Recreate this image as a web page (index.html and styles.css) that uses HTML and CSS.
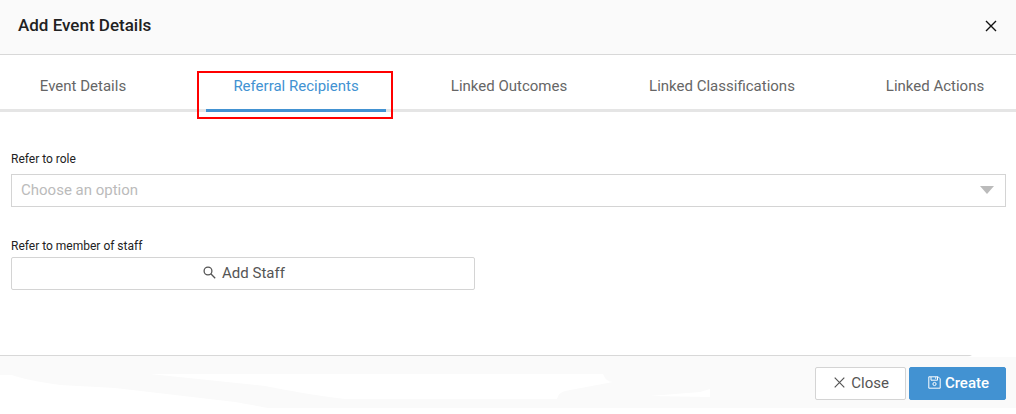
FILE: index.html
```html
<!DOCTYPE html>
<html lang="en">
<head>
<meta charset="utf-8">
<title>Add Event Details</title>
<link rel="stylesheet" href="styles.css">
</head>
<body>
<div class="dialog">
  <header class="header">
    <h1 class="title">Add Event Details</h1>
    <button class="dismiss" type="button" aria-label="Dismiss">
      <svg width="12" height="12" viewBox="0 0 12 12"><path d="M1 1l10 10M11 1L1 11" fill="none" stroke="#111" stroke-width="1.4"/></svg>
    </button>
  </header>
  <nav class="tabs">
    <button class="tab" type="button">Event Details</button>
    <button class="tab active" type="button">Referral Recipients<span class="highlight"></span></button>
    <button class="tab" type="button">Linked Outcomes</button>
    <button class="tab" type="button">Linked Classifications</button>
    <button class="tab" type="button">Linked Actions</button>
  </nav>
  <main class="form">
    <label class="label" for="role">Refer to role</label>
    <div class="select-wrap">
      <select class="select" id="role"><option>Choose an option</option></select>
      <svg class="arrow" width="14" height="8" viewBox="0 0 14 8"><path d="M0 0h14L7 8z" fill="#bbb"/></svg>
    </div>
    <label class="label staff-label" for="staff">Refer to member of staff</label>
    <button class="button staff" id="staff" type="button">
      <svg width="13" height="13" viewBox="0 0 13 13"><g fill="none" stroke="#555" stroke-width="1.3"><circle cx="5" cy="5" r="3.9"/><path d="M7.8 7.8l4.4 4.4"/></g></svg>
      <span>Add Staff</span>
    </button>
  </main>
  <footer class="footer">
    <svg class="strokes" viewBox="0 0 1016 52" preserveAspectRatio="none">
      <path d="M0 19L12 19Q25 24 60 29L115 32L235 46L268 52H0zM150 18H603Q606 26 613 26L565 35Q558 37 557 43H345Q310 39 265 30zM650 40L700 36L710 33V41z" fill="#fff"/>
      <path d="M972 -1H1016V1H968z" fill="#fff"/>
    </svg>
    <button class="button" type="button">
      <svg width="11" height="11" viewBox="0 0 11 11"><path d="M.7.7l9.6 9.6M10.3.7L.7 10.3" fill="none" stroke="#555" stroke-width="1.2"/></svg>
      <span>Close</span>
    </button>
    <button class="button primary" type="button">
      <svg width="13" height="13" viewBox="0 0 13 13"><g fill="none" stroke="#fff"><path d="M.8.8h9.4l2 2v9.4H.8zM3 1v3.2h6.5V1M7.7 1.2v1.6"/><circle cx="6.5" cy="8" r="1.6"/></g></svg>
      <span>Create</span>
    </button>
  </footer>
</div>
</body>
</html>
```
FILE: styles.css
```css
* { box-sizing: border-box; }
body { margin: 0; background: #fff; font-family: Roboto, "Liberation Sans", sans-serif; color: #222; }
button, select { font: inherit; }
.dialog { overflow: hidden; }
.header { display: flex; align-items: center; justify-content: space-between; padding: 13px 18px 17px; background: #fafafa; border-bottom: 1px solid #d8d8d8; }
.title { margin: 0; font-size: 17px; line-height: 24px; font-weight: 500; }
.dismiss { display: flex; padding: 3px 1px 1px; border: 0; background: none; }
.tabs { display: grid; grid-template-columns: repeat(5, 1fr); gap: 33px; margin: 0 -9px 0 -7px; border-bottom: 3px solid #e5e5e5; }
.tab { position: relative; margin-bottom: -3px; padding: 21px 0 13px; border: 0; border-bottom: 3px solid transparent; background: none; font-size: 15px; line-height: 20px; color: #666; white-space: nowrap; }
.active { color: #4292d2; border-bottom-color: #4292d2; }
.highlight { position: absolute; top: 16px; right: -7px; bottom: -10px; left: -9px; border: 2px solid #f00; }
.form { padding: 39px 10px 65px 11px; }
.label { display: block; font-size: 12px; line-height: 16px; color: #222; }
.select-wrap { position: relative; margin-top: 7px; }
.select { display: block; width: 100%; height: 33px; padding: 0 9px 2px; border: 1px solid #d4d4d4; border-radius: 0; appearance: none; background: #fff; font-size: 15px; color: #bbb; }
.arrow { position: absolute; top: 12px; right: 12px; }
.staff-label { margin-top: 31px; }
.button { display: flex; align-items: center; justify-content: center; gap: 6px; height: 33px; padding: 0 16px 2px 18px; border: 1px solid #d4d4d4; border-radius: 2px; background: #fff; font-size: 15px; color: #555; }
.staff { width: 464px; max-width: 100%; margin-top: 3px; }
.footer { position: relative; display: flex; justify-content: flex-end; gap: 3px; padding: 11px 10px 8px; border-top: 1px solid #d8d8d8; background: #fafafa; }
.footer .button { position: relative; }
.strokes { position: absolute; inset: 0; width: 100%; height: 100%; overflow: visible; }
.primary { border-color: #4292d2; background: #4292d2; color: #fff; font-weight: 500; gap: 4px; }
```
